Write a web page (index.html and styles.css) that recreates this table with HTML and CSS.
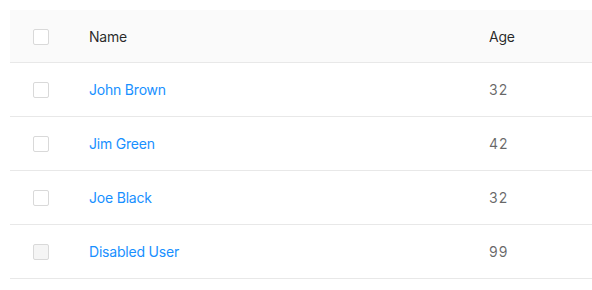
FILE: index.html
```html
<!DOCTYPE html>
<html>
<head>
<meta charset="utf-8">
<link rel="stylesheet" href="styles.css">
</head>
<body>
<div class="table">
  <div class="row head">
    <div class="cell sel"><span class="cb"></span></div>
    <div class="cell name">Name</div>
    <div class="cell age">Age</div>
  </div>
  <div class="row">
    <div class="cell sel"><span class="cb"></span></div>
    <div class="cell name"><a>John Brown</a></div>
    <div class="cell age num">32</div>
  </div>
  <div class="row">
    <div class="cell sel"><span class="cb"></span></div>
    <div class="cell name"><a>Jim Green</a></div>
    <div class="cell age num">42</div>
  </div>
  <div class="row">
    <div class="cell sel"><span class="cb"></span></div>
    <div class="cell name"><a>Joe Black</a></div>
    <div class="cell age num">32</div>
  </div>
  <div class="row">
    <div class="cell sel"><span class="cb disabled"></span></div>
    <div class="cell name"><a>Disabled User</a></div>
    <div class="cell age num">99</div>
  </div>
</div>
</body>
</html>
```
FILE: styles.css
```css
html, body { margin: 0; padding: 0; background: #fff; }
body { padding: 10px 0 0 10px; font-family: Inter, "Noto Sans", sans-serif; font-size: 14px; letter-spacing: -0.2px; }
.table { width: 582px; }
.row { display: grid; grid-template-columns: 63px 400px 1fr; height: 54px; border-bottom: 1px solid #e8e8e8; box-sizing: border-box; align-items: center; }
.row.head { height: 53px; background: #fafafa; color: rgba(0,0,0,0.85); }
.cell { padding: 0 16px; line-height: 21px; }
.sel { display: flex; justify-content: flex-start; padding: 0 0 0 23px; }
.cb { display: block; width: 16px; height: 16px; box-sizing: border-box; border: 1px solid #d9d9d9; border-radius: 2px; background: #fff; }
.cb.disabled { background: #f5f5f5; }
.head .cb { margin-top: 2px; }
a { color: #1890ff; }
.num { color: rgba(0,0,0,0.6); letter-spacing: 1px; }
```
